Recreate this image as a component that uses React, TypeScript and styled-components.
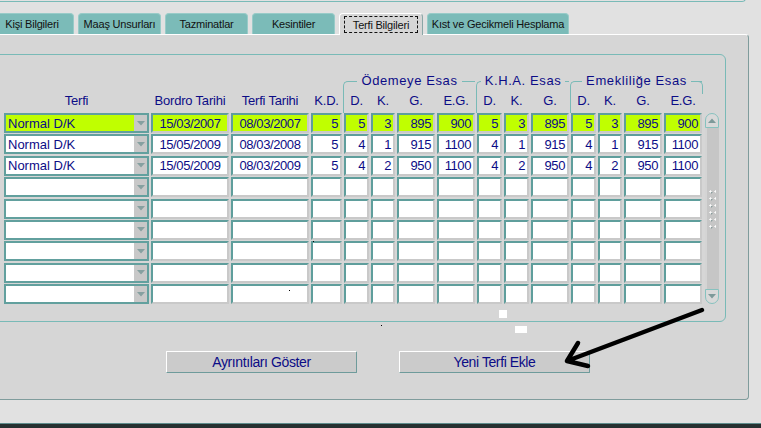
import React from "react";
import styled, { createGlobalStyle } from "styled-components";

const TEAL = "#79bab7";
const TAB = "#7bbbb8";
const NAVY = "#0c0c86";
const PANEL = "#d6d6d6";
const PAGE = "#e1e1e1";
const CELL_DARK = "#5f9e9c";
const CELL_LIGHT = "#c9c9c9";
const HL = "#c0ff00";
const SANS = `"Liberation Sans", Arial, sans-serif`;
const COLS = "145px 78px 78px 31px 25px 24px 38px 38px 25px 25px 38px 25px 24px 38px 38px 15px";

const GlobalStyle = createGlobalStyle`
  html, body { margin: 0; padding: 0; background: ${PAGE}; }
  body { font-family: ${SANS}; }
`;

const Screen = styled.div`
  position: relative;
  width: 761px;
  height: 428px;
  overflow: hidden;
  background: ${PAGE};
  display: flex;
  flex-direction: column;
`;

const PrevFrame = styled.div`
  width: 746px;
  height: 6px;
  margin-top: -4px;
  box-sizing: border-box;
  border-bottom: 1px solid ${TEAL};
  border-right: 1px solid ${TEAL};
  border-bottom-right-radius: 4px;
  flex: none;
`;

const TabRow = styled.div`
  display: flex;
  align-items: flex-end;
  gap: 4px;
  margin-top: 11px;
  margin-left: -10px;
  height: 21px;
  flex: none;
`;

const Tab = styled.div<{ $w: number }>`
  width: ${(p) => p.$w}px;
  height: 21px;
  box-sizing: border-box;
  background: ${TAB};
  border: 1px solid #98cbc8;
  border-bottom: none;
  border-radius: 4px 4px 0 0;
  display: flex;
  align-items: center;
  justify-content: center;
  font-size: 11px;
  letter-spacing: -0.2px;
  color: #111;
  white-space: nowrap;
`;

const ActiveTab = styled.div<{ $w: number }>`
  position: relative;
  z-index: 1;
  width: ${(p) => p.$w}px;
  height: 22px;
  margin-bottom: -1px;
  box-sizing: border-box;
  background: ${PANEL};
  border-top: 1px solid #fff;
  border-left: 1px solid #fff;
  border-right: 1px solid #8aa6a6;
  border-radius: 4px 4px 0 0;
  padding: 2px 4px 2px 4px;
  display: flex;
`;

const FocusBox = styled.div`
  flex: 1;
  border: 1px dashed #111;
  display: flex;
  align-items: center;
  justify-content: center;
  font-size: 11px;
  letter-spacing: -0.2px;
  color: #111;
  white-space: nowrap;
`;

const Panel = styled.div`
  margin-left: -2px;
  width: 751px;
  height: 366px;
  box-sizing: border-box;
  background: ${PANEL};
  border-top: 1px solid #fff;
  border-right: 1px solid #7f9c9c;
  border-bottom: 1px solid #7f9c9c;
  border-radius: 0 4px 4px 0;
  display: flex;
  flex-direction: column;
  flex: none;
`;

const Frame = styled.div`
  margin-top: 19px;
  width: 728px;
  height: 268px;
  box-sizing: border-box;
  border: 1px solid ${TEAL};
  border-radius: 0 6px 6px 0;
  padding: 26px 0 0 5px;
  display: flex;
  flex-direction: column;
  flex: none;
`;

const HeaderGrid = styled.div`
  display: grid;
  grid-template-columns: ${COLS};
  grid-template-rows: 12px 20px;
  column-gap: 2px;
`;

const Group = styled.div<{ $from: number; $to: number; $end?: boolean }>`
  position: relative;
  grid-row: 1 / 3;
  grid-column: ${(p) => p.$from} / ${(p) => p.$to};
  margin-left: -1px;
  border-top: 1px solid ${TEAL};
  border-left: 1px solid ${TEAL};
  border-top-left-radius: 5px;
  display: flex;
  justify-content: center;
  align-items: flex-start;
  &::after {
    content: "";
    display: ${(p) => (p.$end ? "block" : "none")};
    position: absolute;
    right: -1px;
    top: -1px;
    width: 6px;
    height: 12px;
    border-top: 1px solid ${TEAL};
    border-right: 1px solid ${TEAL};
    border-top-right-radius: 5px;
  }
`;

const GroupLabel = styled.span`
  margin-top: -9px;
  padding: 0 4px;
  background: ${PANEL};
  font-size: 13px;
  line-height: 16px;
  letter-spacing: 0.6px;
  color: ${NAVY};
  white-space: nowrap;
`;

const ColLabel = styled.div<{ $col: number }>`
  grid-row: 2;
  grid-column: ${(p) => p.$col};
  text-align: center;
  font-size: 13px;
  letter-spacing: -0.2px;
  line-height: 16px;
  color: ${NAVY};
  white-space: nowrap;
  position: relative;
  z-index: 1;
`;

const BodyGrid = styled.div`
  display: grid;
  grid-template-columns: ${COLS};
  grid-template-rows: repeat(9, 20px);
  column-gap: 2px;
  row-gap: 1.4px;
`;

const Cell = styled.div<{ $hl?: boolean; $align: "left" | "center" | "right" }>`
  box-sizing: border-box;
  height: 20px;
  border: 2px solid;
  border-color: ${CELL_DARK} ${CELL_LIGHT} ${CELL_LIGHT} ${CELL_DARK};
  background: ${(p) => (p.$hl ? HL : "#fff")};
  display: flex;
  align-items: center;
  justify-content: ${(p) => (p.$align === "left" ? "flex-start" : p.$align === "center" ? "center" : "flex-end")};
  padding: 0 2px 0 2px;
  font-size: 13px;
  letter-spacing: -0.4px;
  line-height: 1;
  color: ${NAVY};
  white-space: nowrap;
  overflow: hidden;
`;

const Combo = styled.div`
  box-sizing: border-box;
  height: 20px;
  border: 2px solid #62a09e;
  display: flex;
  background: #fff;
`;

const ComboText = styled.div<{ $hl?: boolean }>`
  flex: 1;
  background: ${(p) => (p.$hl ? HL : "#fff")};
  display: flex;
  align-items: center;
  padding-left: 2px;
  font-size: 13px;
  color: ${NAVY};
  white-space: nowrap;
`;

const ComboButton = styled.div`
  width: 13px;
  background: #c8c8c8;
  display: flex;
  align-items: center;
  justify-content: center;
`;

const Scrollbar = styled.div`
  grid-column: 16;
  grid-row: 1 / -1;
  width: 14px;
  justify-self: end;
  display: flex;
  flex-direction: column;
`;

const ScrollBtn = styled.div<{ $up?: boolean }>`
  height: 15px;
  box-sizing: border-box;
  border: 1px solid #87c2bf;
  border-radius: ${(p) => (p.$up ? "7px 7px 0 0" : "0 0 7px 7px")};
  background: #d9d9d9;
  display: flex;
  align-items: center;
  justify-content: center;
  flex: none;
`;

const Track = styled.div`
  flex: 1;
  background: #c6c6c6;
  border-left: 2px solid #d4d4d4;
  display: flex;
  align-items: center;
  justify-content: center;
`;

const Grip = styled.div`
  width: 8px;
  height: 42px;
  margin-left: -2px;
  background-image: radial-gradient(circle, #fbfbfb 0.9px, transparent 1.3px),
    radial-gradient(circle, #8a9c9c 0.8px, transparent 1.2px);
  background-size: 5px 7px, 5px 7px;
  background-position: 0 0, 1px 1px;
`;

const ButtonRow = styled.div`
  display: flex;
  gap: 42px;
  margin-top: 29px;
  padding-left: 168px;
`;

const ActionButton = styled.button`
  width: 191px;
  height: 22px;
  box-sizing: border-box;
  margin: 0;
  padding: 0;
  background: #cbcbcb;
  border: 1px solid;
  border-color: #fff #6e9b9b #6e9b9b #fff;
  border-radius: 1px;
  font-family: ${SANS};
  font-size: 14px;
  letter-spacing: -0.4px;
  color: ${NAVY};
  text-align: center;
`;

const BottomBar = styled.div`
  margin-top: 23px;
  height: 5px;
  box-sizing: border-box;
  border-top: 1px solid #5e8c8c;
  background: #263030;
  flex: none;
`;

const Overlay = styled.svg`
  position: absolute;
  left: 0;
  top: 0;
  pointer-events: none;
`;

const Speck = styled.div<{ $x: number; $y: number; $w: number; $h: number; $c: string }>`
  position: absolute;
  left: ${(p) => p.$x}px;
  top: ${(p) => p.$y}px;
  width: ${(p) => p.$w}px;
  height: ${(p) => p.$h}px;
  background: ${(p) => p.$c};
`;

const DownTri = ({ color = "#86a0a0" }: { color?: string }) => (
  <svg width="8" height="5" viewBox="0 0 8 5">
    <path d="M0 0 H8 L4 4.5 Z" fill={color} />
  </svg>
);
const UpTri = () => (
  <svg width="8" height="5" viewBox="0 0 8 5">
    <path d="M0 5 H8 L4 0.5 Z" fill="#7e9a9a" />
  </svg>
);

type Row = { terfi: string; bordro: string; tarih: string; nums: string[]; hl?: boolean };

const rows: Row[] = [
  { terfi: "Normal D/K", bordro: "15/03/2007", tarih: "08/03/2007", nums: ["5", "5", "3", "895", "900", "5", "3", "895", "5", "3", "895", "900"], hl: true },
  { terfi: "Normal D/K", bordro: "15/05/2009", tarih: "08/03/2008", nums: ["5", "4", "1", "915", "1100", "4", "1", "915", "4", "1", "915", "1100"] },
  { terfi: "Normal D/K", bordro: "15/05/2009", tarih: "08/03/2009", nums: ["5", "4", "2", "950", "1100", "4", "2", "950", "4", "2", "950", "1100"] },
  ...Array.from({ length: 6 }, () => ({ terfi: "", bordro: "", tarih: "", nums: Array(12).fill("") })),
];

const colLabels = ["Terfi", "Bordro Tarihi", "Terfi Tarihi", "K.D.", "D.", "K.", "G.", "E.G.", "D.", "K.", "G.", "D.", "K.", "G.", "E.G."];

const tabs = [
  { label: "Kişi Bilgileri", w: 84 },
  { label: "Maaş Unsurları", w: 83 },
  { label: "Tazminatlar", w: 83 },
  { label: "Kesintiler", w: 83 },
  { label: "Terfi Bilgileri", w: 84, active: true },
  { label: "Kıst ve Gecikmeli Hesplama", w: 142 },
];

export default function App() {
  return (
    <>
      <GlobalStyle />
      <Screen>
        <PrevFrame />
        <TabRow>
          {tabs.map((t) =>
            t.active ? (
              <ActiveTab key={t.label} $w={t.w}>
                <FocusBox>{t.label}</FocusBox>
              </ActiveTab>
            ) : (
              <Tab key={t.label} $w={t.w}>
                {t.label}
              </Tab>
            )
          )}
        </TabRow>
        <Panel>
          <Frame>
            <HeaderGrid>
              <Group $from={5} $to={9}>
                <GroupLabel>Ödemeye Esas</GroupLabel>
              </Group>
              <Group $from={9} $to={12}>
                <GroupLabel>K.H.A. Esas</GroupLabel>
              </Group>
              <Group $from={12} $to={16} $end>
                <GroupLabel>Emekliliğe Esas</GroupLabel>
              </Group>
              {colLabels.map((l, i) => (
                <ColLabel key={i} $col={i + 1}>
                  {l}
                </ColLabel>
              ))}
            </HeaderGrid>
            <BodyGrid>
              {rows.map((r, ri) => (
                <React.Fragment key={ri}>
                  <Combo>
                    <ComboText $hl={r.hl}>{r.terfi}</ComboText>
                    <ComboButton>
                      <DownTri />
                    </ComboButton>
                  </Combo>
                  <Cell $hl={r.hl} $align="center">{r.bordro}</Cell>
                  <Cell $hl={r.hl} $align="center">{r.tarih}</Cell>
                  {r.nums.map((n, ni) => (
                    <Cell key={ni} $hl={r.hl} $align="right">
                      {n}
                    </Cell>
                  ))}
                </React.Fragment>
              ))}
              <Scrollbar>
                <ScrollBtn $up>
                  <UpTri />
                </ScrollBtn>
                <Track>
                  <Grip />
                </Track>
                <ScrollBtn>
                  <DownTri color="#7e9a9a" />
                </ScrollBtn>
              </Scrollbar>
            </BodyGrid>
          </Frame>
          <ButtonRow>
            <ActionButton>Ayrıntıları Göster</ActionButton>
            <ActionButton>Yeni Terfi Ekle</ActionButton>
          </ButtonRow>
        </Panel>
        <BottomBar />
        <Speck $x={499} $y={310} $w={8} $h={8} $c="#fff" />
        <Speck $x={515} $y={326} $w={12} $h={7} $c="#fff" />
        <Speck $x={381} $y={325} $w={1} $h={1} $c="#000" />
        <Speck $x={313} $y={241} $w={1} $h={1} $c="#000" />
        <Speck $x={289} $y={290} $w={1} $h={1} $c="#000" />
        <Overlay width="761" height="428" viewBox="0 0 761 428">
          <path
            d="M702 310 L567 361 M578 343 L567 361 L588 366"
            fill="none"
            stroke="#000"
            strokeWidth="4.5"
            strokeLinecap="round"
            strokeLinejoin="round"
          />
        </Overlay>
      </Screen>
    </>
  );
}
